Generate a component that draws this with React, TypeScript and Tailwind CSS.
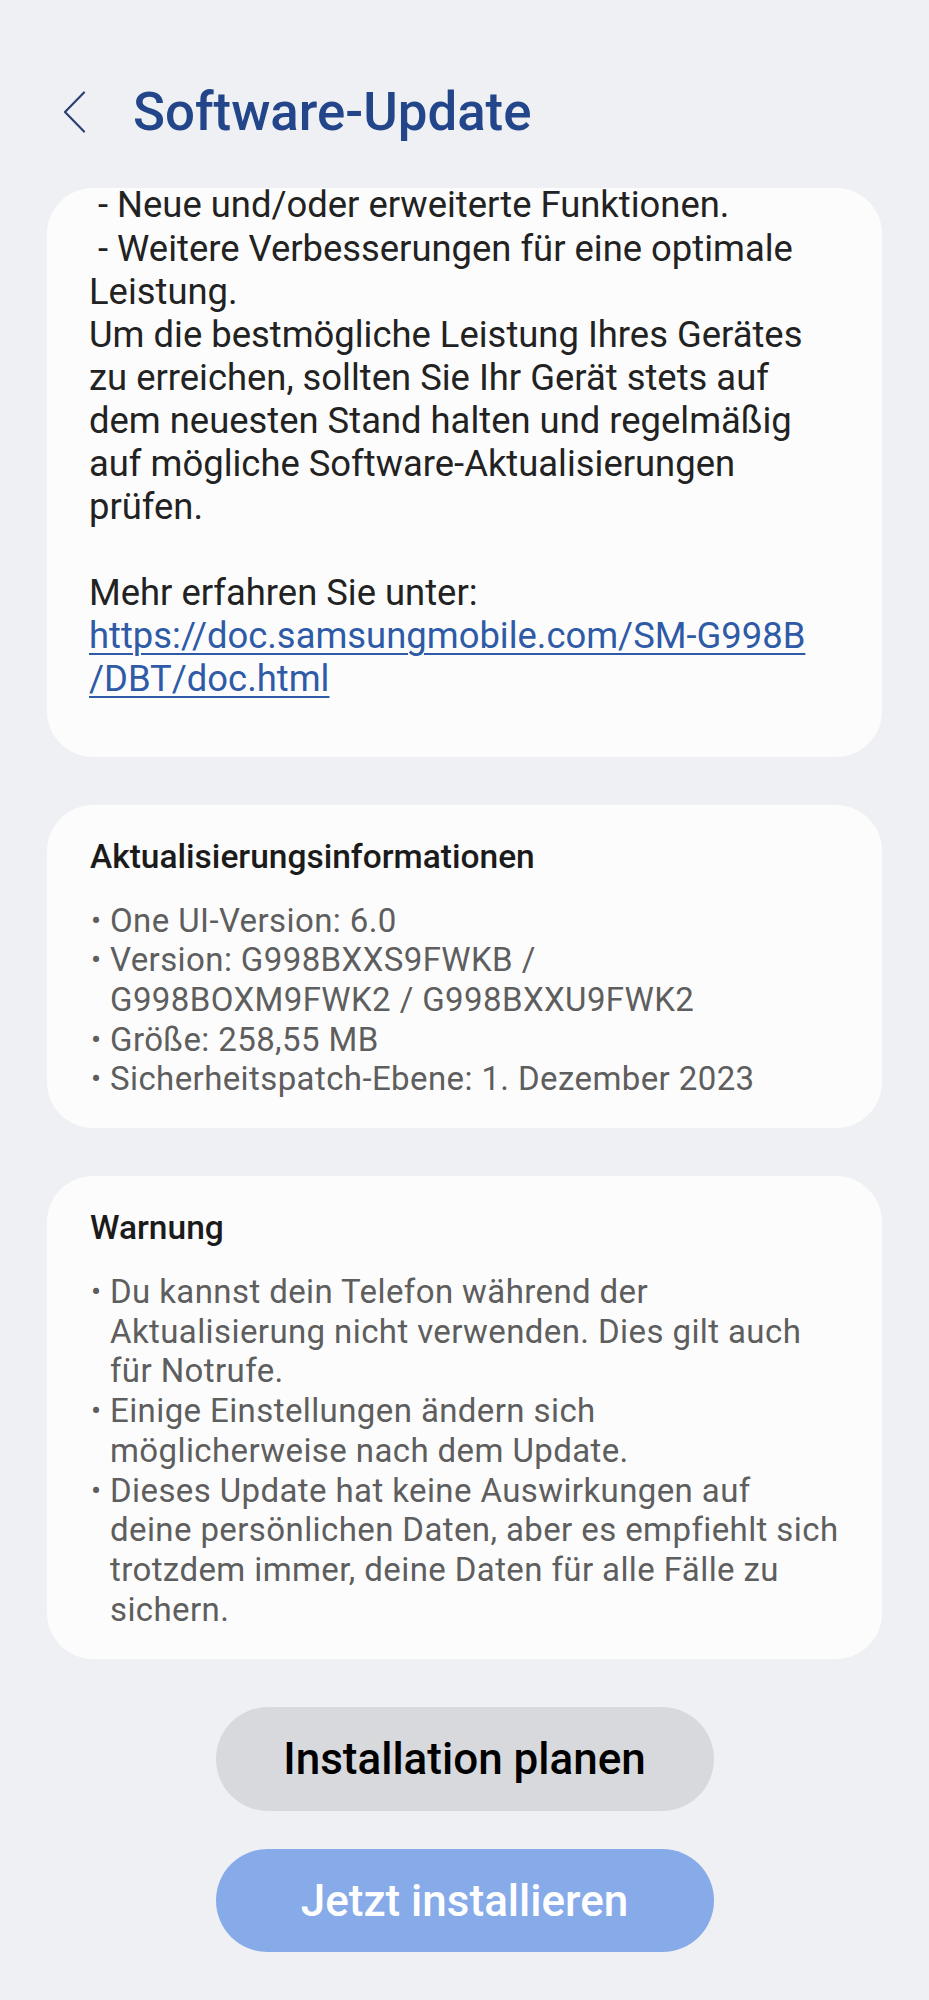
import React from "react";

const body = [
  "Leistung.",
  "Um die bestmögliche Leistung Ihres Gerätes",
  "zu erreichen, sollten Sie Ihr Gerät stets auf",
  "dem neuesten Stand halten und regelmäßig",
  "auf mögliche Software-Aktualisierungen",
  "prüfen.",
  "\u00a0",
  "Mehr erfahren Sie unter:",
];

const info: string[][] = [
  ["One UI-Version: 6.0"],
  ["Version: G998BXXS9FWKB /", "G998BOXM9FWK2 / G998BXXU9FWK2"],
  ["Größe: 258,55 MB"],
  ["Sicherheitspatch-Ebene: 1. Dezember 2023"],
];

const warn: string[][] = [
  ["Du kannst dein Telefon während der", "Aktualisierung nicht verwenden. Dies gilt auch", "für Notrufe."],
  ["Einige Einstellungen ändern sich", "möglicherweise nach dem Update."],
  [
    "Dieses Update hat keine Auswirkungen auf",
    "deine persönlichen Daten, aber es empfiehlt sich",
    "trotzdem immer, deine Daten für alle Fälle zu",
    "sichern.",
  ],
];

function BulletList({ items }: { items: string[][] }) {
  return (
    <div className="mt-[24px] text-[33px] leading-[39.7px] tracking-[0.4px] text-[#5e5e5e]">
      {items.map((lines, i) => (
        <div key={i} className="flex">
          <span className="w-[20px] shrink-0 pl-[1px] text-[30px]">•</span>
          <div>
            {lines.map((l, j) => (
              <div key={j} className="whitespace-pre">
                {l}
              </div>
            ))}
          </div>
        </div>
      ))}
    </div>
  );
}

export default function App() {
  return (
    <div
      className="min-h-[2000px] w-full bg-[#eff0f4]"
      style={{ fontFamily: "Roboto, 'Noto Sans', sans-serif" }}
    >
      {/* Header */}
      <div className="flex h-[188px] items-start pl-[62px] pt-[82px]">
        <div className="flex h-[60px] items-center">
          <svg width="24" height="42" viewBox="0 0 24 42" fill="none">
            <path d="M22 1.5 L3 21 L22 40.5" stroke="#2b4170" strokeWidth="2.2" strokeLinecap="round" strokeLinejoin="round" />
          </svg>
        </div>
        <h1 className="ml-[47px] text-[52.8px] font-medium leading-[60px] text-[#23468a]">
          Software-Update
        </h1>
      </div>

      <div className="flex flex-col gap-[48px] px-[47px]">
        {/* Card 1 */}
        <div className="rounded-[46px] bg-[#fcfcfc] pb-[57px] pl-[42px] pr-[20px]">
          <div className="text-[36.4px] leading-[43px] text-[#222222]">
            <div className="whitespace-pre pb-[4.5px] leading-[34px]"> - Neue und/oder erweiterte Funktionen.</div>
            <div className="whitespace-pre"> - Weitere Verbesserungen für eine optimale</div>
            {body.map((l, i) => (
              <div key={i} className="whitespace-pre">
                {l}
              </div>
            ))}
            <a className="block text-[#2e5aa7] underline decoration-[1.5px] underline-offset-[5px]" href="#">
              https://doc.samsungmobile.com/SM-G998B
              <br />
              /DBT/doc.html
            </a>
          </div>
        </div>

        {/* Card 2 */}
        <div className="rounded-[46px] bg-[#fcfcfc] pb-[29px] pl-[43px] pr-[20px] pt-[32px]">
          <div className="text-[33.5px] font-medium leading-[40px] text-[#1b1b1b]">Aktualisierungsinformationen</div>
          <BulletList items={info} />
        </div>

        {/* Card 3 */}
        <div className="rounded-[46px] bg-[#fcfcfc] pb-[30px] pl-[43px] pr-[20px] pt-[32px]">
          <div className="text-[33.5px] font-medium leading-[40px] text-[#1b1b1b]">Warnung</div>
          <div className="mt-[1px]">
            <BulletList items={warn} />
          </div>
        </div>
      </div>

      {/* Buttons */}
      <div className="mt-[48px] flex flex-col items-center gap-[38px] pb-[48px]">
        <button className="flex h-[104px] w-[498px] items-center justify-center rounded-full bg-[#d8d9dd] text-[44px] font-medium text-black">
          Installation planen
        </button>
        <button className="flex h-[103px] w-[498px] items-center justify-center rounded-full bg-[#87abe9] text-[44px] font-medium text-white">
          Jetzt installieren
        </button>
      </div>
    </div>
  );
}
